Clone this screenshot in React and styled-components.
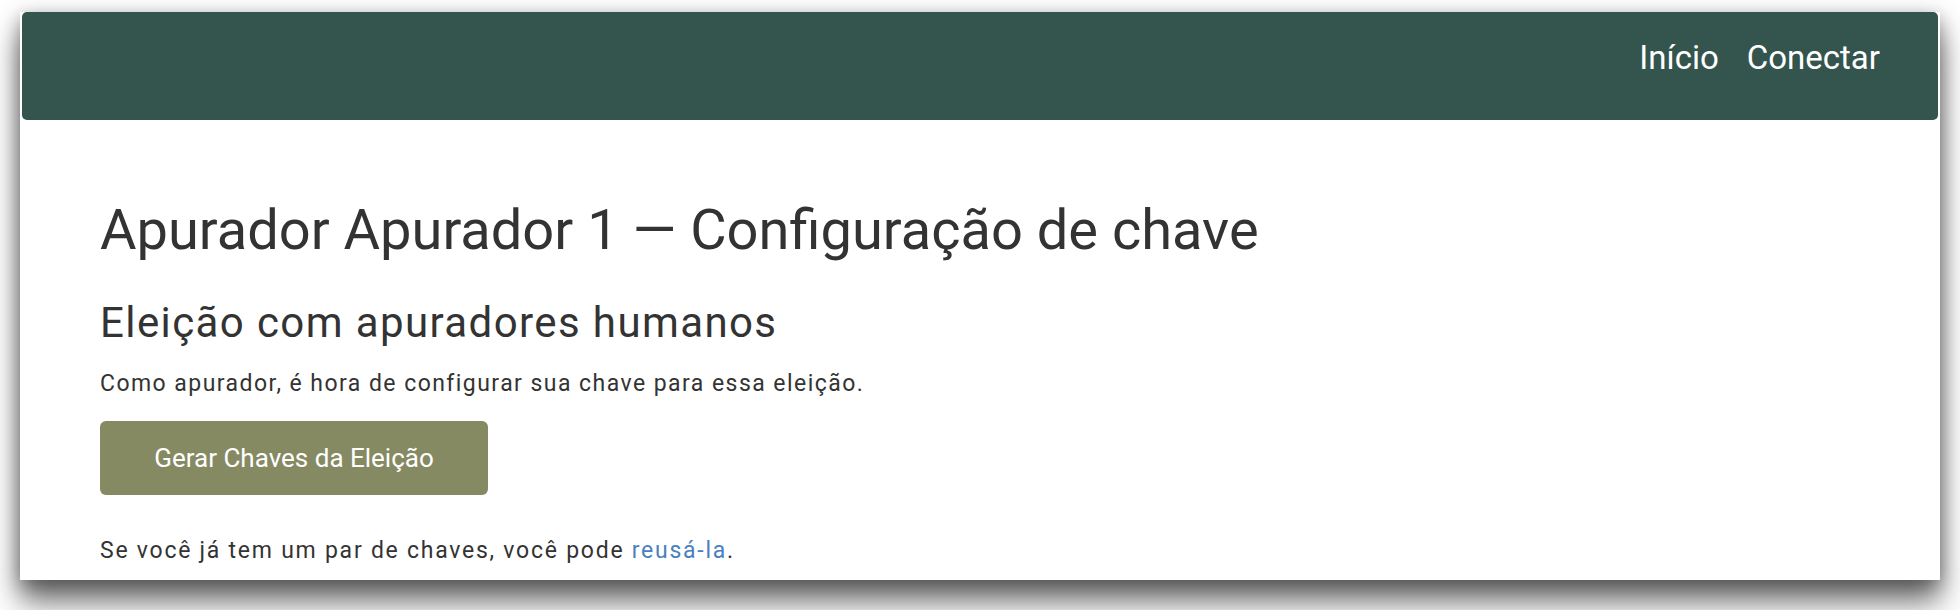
import styled, { createGlobalStyle } from "styled-components"

const GlobalStyle = createGlobalStyle`
    html, body {
        margin: 0;
        padding: 0;
        background: #ffffff;
        height: 610px;
        overflow: hidden;
    }
    body {
        font-family: Roboto, "Liberation Sans", sans-serif;
        color: #333333;
    }
`

export default function App() {
    return (
        <>
            <GlobalStyle />
            <Window>
                <Navbar>
                    <NavLink href="#">Início</NavLink>
                    <NavLink href="#">Conectar</NavLink>
                </Navbar>

                <Content>
                    <Title>Apurador Apurador 1 — Configuração de chave</Title>
                    <Subtitle>Eleição com apuradores humanos</Subtitle>
                    <Text>Como apurador, é hora de configurar sua chave para essa eleição.</Text>
                    <Button>Gerar Chaves da Eleição</Button>
                    <Text $last>Se você já tem um par de chaves, você pode <Link href="#">reusá-la</Link>.</Text>
                </Content>
            </Window>
        </>
    )
}

const Window = styled.div`
    margin: 12px 20px 0;
    height: 568px;
    padding: 0 2px;
    background: #ffffff;
    box-shadow: 0 22px 28px rgba(0, 0, 0, 0.55), 0 4px 18px rgba(0, 0, 0, 0.35);
    overflow: hidden;
`

const Navbar = styled.nav`
    height: 108px;
    box-sizing: border-box;
    background: #33554e;
    border-radius: 5px;
    display: flex;
    justify-content: flex-end;
    align-items: flex-start;
    gap: 28px;
    padding: 22px 58px 0 0;
`

const NavLink = styled.a`
    color: #ffffff;
    text-decoration: none;
    font-size: 33px;
    line-height: 48px;
`

const Content = styled.div`
    padding: 77px 0 0 78px;
`

const Title = styled.h1`
    margin: 0;
    font-size: 56px;
    font-weight: 400;
    line-height: 1.2;
    color: #333333;
`

const Subtitle = styled.h2`
    margin: 34px 0 0;
    font-size: 42px;
    font-weight: 400;
    line-height: 50px;
    letter-spacing: 1.4px;
    color: #333333;
`

const Text = styled.p`
    margin: ${(p) => (p.$last ? "41px 0 0" : "21px 0 0")};
    font-size: 23px;
    line-height: 30px;
    letter-spacing: ${(p) => (p.$last ? "1.75px" : "1.45px")};
`

const Link = styled.a`
    color: #4a80c0;
    text-decoration: none;
`

const Button = styled.button`
    display: block;
    margin-top: 22px;
    width: 388px;
    height: 74px;
    border: none;
    border-radius: 6px;
    background: #868a63;
    color: #ffffff;
    font-family: Roboto, "Liberation Sans", sans-serif;
    font-size: 26px;
`
